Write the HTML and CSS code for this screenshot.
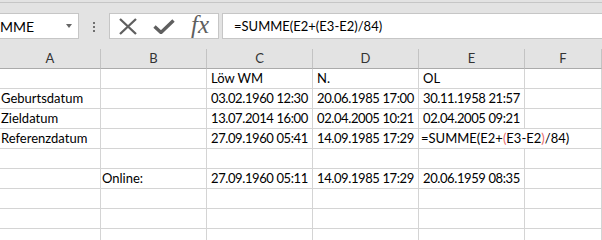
FILE: index.html
```html
<!DOCTYPE html>
<html>
<head>
    <meta charset="UTF-8">
    <title>Zeitrechnung</title>
    <link rel="stylesheet" href="styles.css">
</head>
<body>

    <div class="toolbar">
        <div class="namebox">
            <span class="nametext">MME</span>
            <span class="arrow"></span>
        </div>
        <div class="dots"><span></span><span></span><span></span></div>
        <div class="fbuttons">
            <span class="fbtn">
                <svg width="20" height="17" viewBox="0 0 20 17">
                    <path d="M2 1 L18 16 M18 1 L2 16" stroke="#5f5f5f" stroke-width="2.3" fill="none"/>
                </svg>
            </span>
            <span class="fbtn">
                <svg width="22" height="15" viewBox="0 0 22 15">
                    <path d="M1.5 7.5 L8 13.5 L20.5 1.5" stroke="#5f5f5f" stroke-width="3.4" fill="none"/>
                </svg>
            </span>
            <span class="fbtn fx">fx</span>
        </div>
        <div class="finput">=SUMME(E2+(E3-E2)/84)</div>
    </div>

    <div class="sheet">
        <div class="hcell">A</div>
        <div class="hcell">B</div>
        <div class="hcell">C</div>
        <div class="hcell">D</div>
        <div class="hcell">E</div>
        <div class="hcell">F</div>

        <div class="cell"></div>
        <div class="cell"></div>
        <div class="cell">Löw WM</div>
        <div class="cell">N.</div>
        <div class="cell">OL</div>
        <div class="cell"></div>

        <div class="cell">Geburtsdatum</div>
        <div class="cell"></div>
        <div class="cell date">03.02.1960 12:30</div>
        <div class="cell date">20.06.1985 17:00</div>
        <div class="cell date">30.11.1958 21:57</div>
        <div class="cell"></div>

        <div class="cell">Zieldatum</div>
        <div class="cell"></div>
        <div class="cell date">13.07.2014 16:00</div>
        <div class="cell date">02.04.2005 10:21</div>
        <div class="cell date">02.04.2005 09:21</div>
        <div class="cell"></div>

        <div class="cell">Referenzdatum</div>
        <div class="cell"></div>
        <div class="cell date">27.09.1960 05:41</div>
        <div class="cell date">14.09.1985 17:29</div>
        <div class="cell editing">=SUMME(E2+<span class="ref">(</span>E3-E2<span class="ref">)</span>/84)</div>

        <div class="cell"></div>
        <div class="cell"></div>
        <div class="cell"></div>
        <div class="cell"></div>
        <div class="cell"></div>
        <div class="cell"></div>

        <div class="cell"></div>
        <div class="cell">Online:</div>
        <div class="cell date">27.09.1960 05:11</div>
        <div class="cell date">14.09.1985 17:29</div>
        <div class="cell date">20.06.1959 08:35</div>
        <div class="cell"></div>

        <div class="cell"></div><div class="cell"></div><div class="cell"></div>
        <div class="cell"></div><div class="cell"></div><div class="cell"></div>

        <div class="cell"></div><div class="cell"></div><div class="cell"></div>
        <div class="cell"></div><div class="cell"></div><div class="cell"></div>

        <div class="cell"></div><div class="cell"></div><div class="cell"></div>
        <div class="cell"></div><div class="cell"></div><div class="cell"></div>
    </div>

</body>
</html>
```

FILE: styles.css
```css
body {
    margin: 0;
    background-color: #e3e3e3;
    font-family: Lato, "Liberation Sans", sans-serif;
    font-size: 13px;
    color: #000;
    overflow: hidden;
}

.toolbar {
    display: flex;
    align-items: flex-start;
    box-sizing: border-box;
    height: 47px;
    margin-top: 2px;
    padding-top: 10px;
    border-top: 1px solid #c6c6c6;
}

.namebox, .fbuttons, .finput {
    box-sizing: border-box;
    height: 26px;
    background-color: #fff;
    border: 1px solid #c6c6c6;
}

.namebox {
    display: flex;
    align-items: center;
    width: 80px;
    margin-left: -1px;
}

.nametext {
    font-size: 14px;
}

.arrow {
    margin-left: auto;
    margin-right: 6px;
    border-left: 3.5px solid transparent;
    border-right: 3.5px solid transparent;
    border-top: 4px solid #666;
}

.dots {
    display: flex;
    flex-direction: column;
    gap: 2px;
    margin: 9px 0 0 14px;
}

.dots span {
    width: 2px;
    height: 2px;
    background-color: #707070;
}

.fbuttons {
    display: flex;
    width: 110px;
    margin-left: 14px;
}

.fbtn {
    display: flex;
    align-items: center;
    justify-content: center;
    width: 36px;
}

.fx {
    font-family: "Liberation Serif", serif;
    font-style: italic;
    font-size: 25px;
    color: #5f5f5f;
    padding-bottom: 3px;
}

.finput {
    flex: 1;
    margin-left: 3px;
    margin-right: -1px;
    padding-left: 11px;
    line-height: 24px;
    white-space: nowrap;
}

.sheet {
    display: grid;
    grid-template-columns: 101px 106px 106px 106px 106px 1fr;
    grid-auto-rows: 20px;
    background-color: #fff;
}

.hcell {
    box-sizing: border-box;
    background-color: #e3e3e3;
    border-right: 1px solid #c3c3c3;
    border-bottom: 1px solid #ababab;
    text-align: center;
    line-height: 19px;
    color: #333;
}

.cell {
    box-sizing: border-box;
    border-right: 1px solid #d4d4d4;
    border-bottom: 1px solid #d4d4d4;
    padding-left: 4px;
    line-height: 19px;
    white-space: nowrap;
    overflow: hidden;
}

.sheet .cell:nth-child(6n+1) {
    padding-left: 1px;
}

.date {
    letter-spacing: -0.4px;
}

.editing {
    grid-column: span 2;
    padding-left: 2px;
}

.ref {
    color: #e96b6b;
}
```
